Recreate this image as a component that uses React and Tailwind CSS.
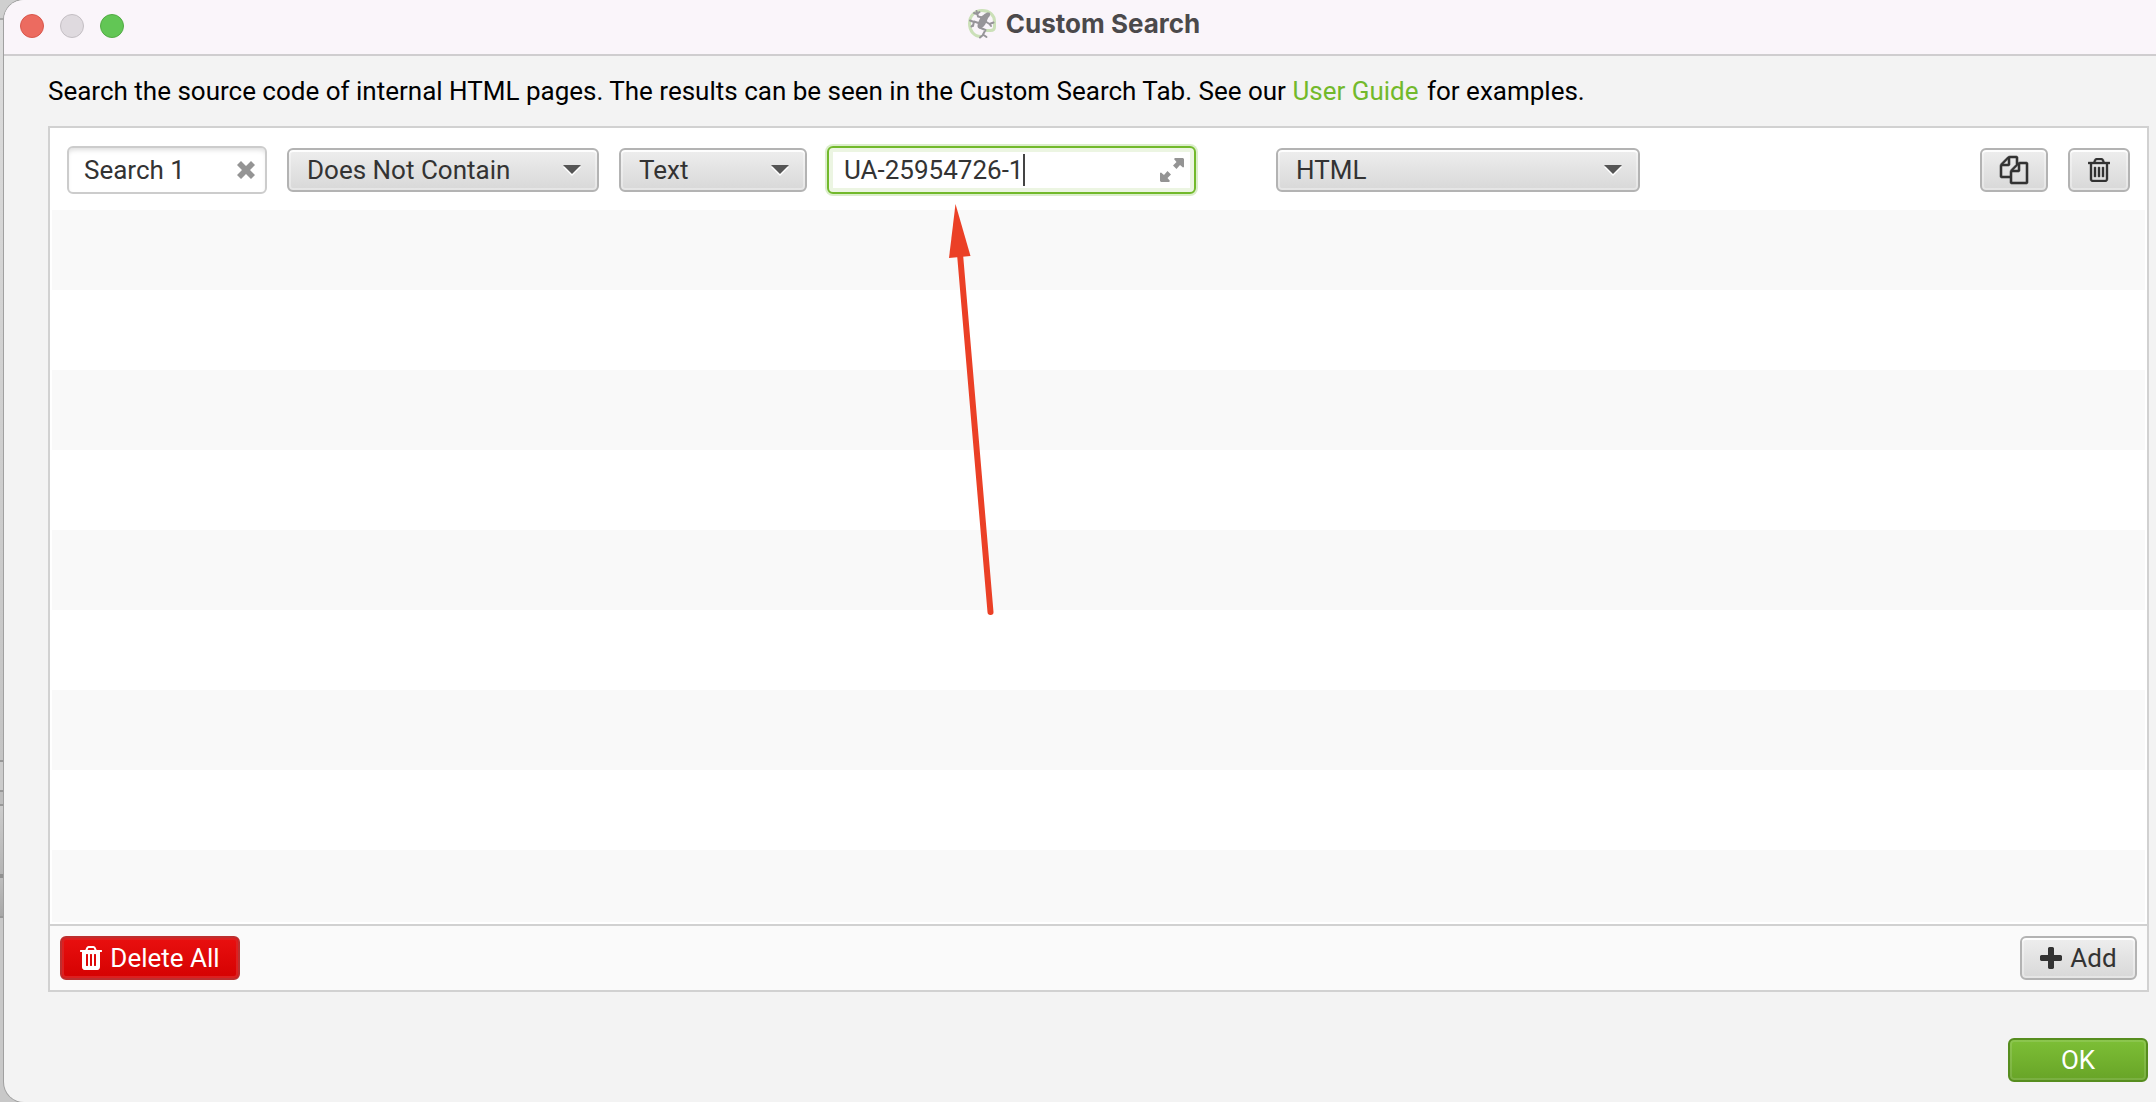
function TrashSolid() {
  return (
    <svg aria-hidden="true" viewBox="192 128 1408 1536" className="h-6 w-[22px] fill-current">
      <path d="M704 1376v-704q0-14-9-23t-23-9h-64q-14 0-23 9t-9 23v704q0 14 9 23t23 9h64q14 0 23-9t9-23zm256 0v-704q0-14-9-23t-23-9h-64q-14 0-23 9t-9 23v704q0 14 9 23t23 9h64q14 0 23-9t9-23zm256 0v-704q0-14-9-23t-23-9h-64q-14 0-23 9t-9 23v704q0 14 9 23t23 9h64q14 0 23-9t9-23zm-544-992h448l-48-117q-7-9-17-11h-317q-10 2-17 11zm928 32v64q0 14-9 23t-23 9h-96v948q0 83-47 143.5t-113 60.5h-832q-66 0-113-58.5t-47-141.5v-952h-96q-14 0-23-9t-9-23v-64q0-14 9-23t23-9h309l70-167q15-37 54-63t79-26h320q40 0 79 26t54 63l70 167h309q14 0 23 9t9 23z" />
    </svg>
  );
}

function TrashOutline() {
  return (
    <svg aria-hidden="true" viewBox="192 128 1408 1536" className="h-6 w-[22px] fill-current stroke-current">
      <path
        strokeWidth="24"
        d="M704 736v576q0 14-9 23t-23 9h-64q-14 0-23-9t-9-23v-576q0-14 9-23t23-9h64q14 0 23 9t9 23zm256 0v576q0 14-9 23t-23 9h-64q-14 0-23-9t-9-23v-576q0-14 9-23t23-9h64q14 0 23 9t9 23zm256 0v576q0 14-9 23t-23 9h-64q-14 0-23-9t-9-23v-576q0-14 9-23t23-9h64q14 0 23 9t9 23zm128 724v-948h-896v948q0 22 7 40.5t14.5 27 10.5 8.5h832q3 0 10.5-8.5t14.5-27 7-40.5zm-672-1076h448l-48-117q-7-9-17-11h-317q-10 2-17 11zm928 32v64q0 14-9 23t-23 9h-96v948q0 83-47 143.5t-113 60.5h-832q-66 0-113-58.5t-47-141.5v-952h-96q-14 0-23-9t-9-23v-64q0-14 9-23t23-9h309l70-167q15-37 54-63t79-26h320q40 0 79 26t54 63l70 167h309q14 0 23 9t9 23z"
      />
    </svg>
  );
}

function CopyIcon() {
  return (
    <svg aria-hidden="true" viewBox="0 0 1792 1792" className="size-7 overflow-visible fill-current stroke-current">
      <path
        strokeWidth="36"
        d="M1696 384q40 0 68 28t28 68v1216q0 40-28 68t-68 28h-960q-40 0-68-28t-28-68v-288h-544q-40 0-68-28t-28-68v-672q0-40 20-88t48-76l408-408q28-28 76-48t88-20h416q40 0 68 28t28 68v328q68-40 128-40h416zm-544 213l-299 299h299v-299zm-640-384l-299 299h299v-299zm196 647l316-316v-416h-384v416q0 40-28 68t-68 28h-416v640h512v-256q0-40 20-88t48-76zm956 804v-1152h-384v416q0 40-28 68t-68 28h-416v640h896z"
      />
    </svg>
  );
}

function PlusIcon() {
  return (
    <svg aria-hidden="true" viewBox="192 128 1408 1408" className="size-[22px] fill-current">
      <path d="M1600 736v192q0 40-28 68t-68 28h-416v416q0 40-28 68t-68 28h-192q-40 0-68-28t-28-68v-416h-416q-40 0-68-28t-28-68v-192q0-40 28-68t68-28h416v-416q0-40 28-68t68-28h192q40 0 68 28t28 68v416h416q40 0 68 28t28 68z" />
    </svg>
  );
}

function ClearIcon() {
  return (
    <svg aria-hidden="true" viewBox="0 0 18 18" className="size-[18px] fill-[#949494]">
      <path d="M4 0 9 5 14 0 18 4 13 9 18 14 14 18 9 13 4 18 0 14 5 9 0 4Z" />
    </svg>
  );
}

function ExpandIcon() {
  return (
    <svg aria-hidden="true" viewBox="0 0 24 24" className="size-6 fill-[#949494]">
      <path d="M15 0h8l1 1v8l-1 .5-3-2.500L16.500 11 13 7.500 16.500 4 14 1ZM9 24H1l-1-1v-8l1-.5 3 2.500L7.500 13 11 16.500 7.500 20 10 23Z" />
    </svg>
  );
}

function FrogLogo() {
  return (
    <svg aria-hidden="true" viewBox="0 0 28 30" className="h-[30px] w-7 fill-none">
      <path
        d="M13 27.500C6 27.500 1.500 22 1.500 14.500 1.500 6.500 7 1.500 14 1.500c7.500 0 12.500 4.500 12.500 11v5.500c0 2.500-1.500 3.500-4 3.500H18"
        stroke="#cbe0b8"
        strokeWidth="3"
      />
      <path
        d="M16.500 5C18 3.500 20.500 3 21.700 3.800c.8 1 .5 3-.7 4.200-1.200 1-1.500 2.500-2.500 5-1.500 3.500-4 6-6.500 6.500-1.500.2-2.500-.8-2.500-2.500 0-3 1.800-6 3-8.500.8-1.600 2.500-2 4-3.500Z"
        fill="#979599"
      />
      <path
        d="M14.500 8.500 10 7.500 8.500 2M6 4l3 1 2.500-2M10.500 14 6 12.500 5 17M2 11.500l4 1.500M3.500 17.500 5 16M17.500 12.500l4 2.500 4-1.500M21.500 15l1.500 2M11.500 18.500l6 2.500-2.500 4.500 3.500 2.500M12 28.500l3-2.500"
        stroke="#979599"
        strokeWidth="2"
        strokeLinecap="round"
        strokeLinejoin="round"
      />
    </svg>
  );
}

const FACE =
  "rounded-md border-2 border-[#b3b3b3] bg-linear-to-b from-[#eeeeee] to-[#d8d8d8] text-[#333333] shadow-[inset_0_2px_0_rgba(255,255,255,0.9),inset_0_0_0_2px_rgba(255,255,255,0.35)]";

function Dropdown({ label, options, className }) {
  return (
    <div className={"grid h-11 items-center " + className}>
      <select
        aria-label={label}
        className={"col-start-1 row-start-1 h-11 w-full appearance-none pl-[18px] outline-none " + FACE}
      >
        {options.map((o) => (
          <option key={o}>{o}</option>
        ))}
      </select>
      <svg
        aria-hidden="true"
        viewBox="0 0 18 11"
        className="pointer-events-none col-start-1 row-start-1 mr-[18px] h-[11px] w-[18px] justify-self-end"
      >
        <path d="M0 2h18l-9 9Z" fill="#ffffff" />
        <path d="M0 0h18l-9 9Z" fill="#555555" />
      </svg>
    </div>
  );
}

function Arrow() {
  return (
    <svg aria-hidden="true" viewBox="0 0 46 412" className="pointer-events-none absolute top-[204px] left-[945px] h-[412px] w-[46px]">
      <path d="M11 50 41.500 408" stroke="#eb4026" strokeWidth="6" strokeLinecap="round" />
      <path d="M6.500 0 21.500 52 0 54Z" fill="#eb4026" />
    </svg>
  );
}

function BackgroundWindow() {
  return (
    <div aria-hidden="true" className="-mr-5 flex w-6 flex-col bg-[#c8c8c8]">
      <div className="h-5 border-b-2 border-[#a8a8a8] bg-[#cfcfcf]" />
      <div className="h-185 bg-linear-to-b from-[#dcdcdc] to-[#c4c4c4]" />
      <div className="h-8 border-y-2 border-[#989898] bg-[#cbcbcb]" />
      <div className="h-[14px] border-b-2 border-[#989898] bg-[#bdbdbd]" />
      <div className="h-18 border-b-4 border-[#909090] bg-linear-to-b from-[#cccccc] to-[#b4b4b4]" />
      <div className="h-10 border-b-2 border-[#989898] bg-linear-to-b from-[#bdbdbd] to-[#a8a8a8]" />
    </div>
  );
}

export default function App() {
  return (
    <div className="flex min-h-screen font-[Roboto,sans-serif] text-[26px] leading-8 text-black">
      <BackgroundWindow />
      <main className="relative flex flex-1 flex-col rounded-l-[20px] bg-[#f3f3f3] shadow-[0_0_0_1px_#a0a0a0]">
        <header className="grid h-14 grid-cols-[1fr_auto_1fr] items-center rounded-tl-[20px] border-b-2 border-[#cfcdcf] bg-[#faf5fa] pb-[2px]">
          <div className="flex gap-4 pl-4">
            <button aria-label="Close" className="size-6 rounded-full border border-[#d9574c] bg-[#ec6b60]" />
            <button aria-label="Minimize" className="size-6 rounded-full border border-[#c4bfc4] bg-[#dfdadf]" />
            <button aria-label="Zoom" className="size-6 rounded-full border border-[#52ab44] bg-[#62c655]" />
          </div>
          <div className="flex items-center gap-[10px] pb-1 pl-2">
            <FrogLogo />
            <h1 className="font-[Inter,sans-serif] text-[26px] font-bold text-[#4b494b]">Custom Search</h1>
          </div>
        </header>

        <p className="mt-[19px] ml-11">
          Search the source code of internal HTML pages. The results can be seen in the Custom Search Tab. See our{" "}
          <a href="#guide" className="mr-[2px] text-[#72b92b]">User Guide</a> for examples.
        </p>

        <section className="mt-[19px] mr-[7px] ml-11 border-2 border-[#d1d1d1] bg-white">
          <div className="p-[2px]">
            <div className="flex h-20 items-center pr-[15px] pl-[15px]">
              <div className="mr-5 flex h-12 w-50 items-center rounded-md border-2 border-[#cccccc] bg-white pr-[10px] pl-[15px] shadow-[inset_0_4px_5px_-2px_#dddddd]">
                <input aria-label="Search name" defaultValue="Search 1" className="min-w-0 flex-1 text-[#333333] outline-none" />
                <button aria-label="Clear">
                  <ClearIcon />
                </button>
              </div>
              <Dropdown label="Condition" options={["Does Not Contain", "Contains"]} className="mr-5 w-78" />
              <Dropdown label="Match type" options={["Text", "Regex"]} className="mr-5 w-47" />
              <div className="mr-20 flex h-12 w-[369px] items-center rounded-md border-2 border-[#72b92b] bg-white pr-[10px] pl-[15px] shadow-[inset_0_0_0_4px_#ecf5e2,0_0_0_2px_#dbeecb]">
                <input aria-label="Search text" defaultValue="UA-25954726-1" className="field-sizing-content text-[#333333] outline-none" />
                <span aria-hidden="true" className="h-8 w-[2px] bg-[#444444]" />
                <button aria-label="Expand" className="ml-auto">
                  <ExpandIcon />
                </button>
              </div>
              <Dropdown label="Search in" options={["HTML", "Page Text"]} className="w-91" />
              <div className="ml-auto flex gap-5">
                <button aria-label="Duplicate" className={"flex h-11 w-17 items-center justify-center " + FACE}>
                  <CopyIcon />
                </button>
                <button aria-label="Delete" className={"flex h-11 w-[62px] items-center justify-center " + FACE}>
                  <TrashOutline />
                </button>
              </div>
            </div>
            {[0, 1, 2, 3].map((i) => (
              <div key={i}>
                <div className="h-20 bg-[#f9f9f9]" />
                <div className="h-20" />
              </div>
            ))}
            <div className="h-18 bg-[#f9f9f9]" />
          </div>
          <footer className="flex items-center justify-between border-t-2 border-[#d1d1d1] bg-[#fafafa] px-[10px] py-[10px]">
            <button className="flex h-11 w-45 items-center justify-center gap-2 rounded-md border-2 border-[#bd2f2f] bg-linear-to-b from-[#e90f0f] to-[#d50202] text-white shadow-[inset_0_0_0_2px_#dc2020]">
              <TrashSolid />
              Delete All
            </button>
            <button className={"flex h-11 w-[117px] items-center justify-center gap-2 " + FACE}>
              <PlusIcon />
              Add
            </button>
          </footer>
        </section>

        <div className="mt-[46px] mr-2 flex justify-end">
          <button className="h-11 w-35 rounded-md border-2 border-[#568d1e] bg-linear-to-b from-[#7dbf36] to-[#68a427] text-white shadow-[inset_0_0_0_2px_rgba(255,255,255,0.12)]">
            OK
          </button>
        </div>
        <Arrow />
      </main>
    </div>
  );
}
